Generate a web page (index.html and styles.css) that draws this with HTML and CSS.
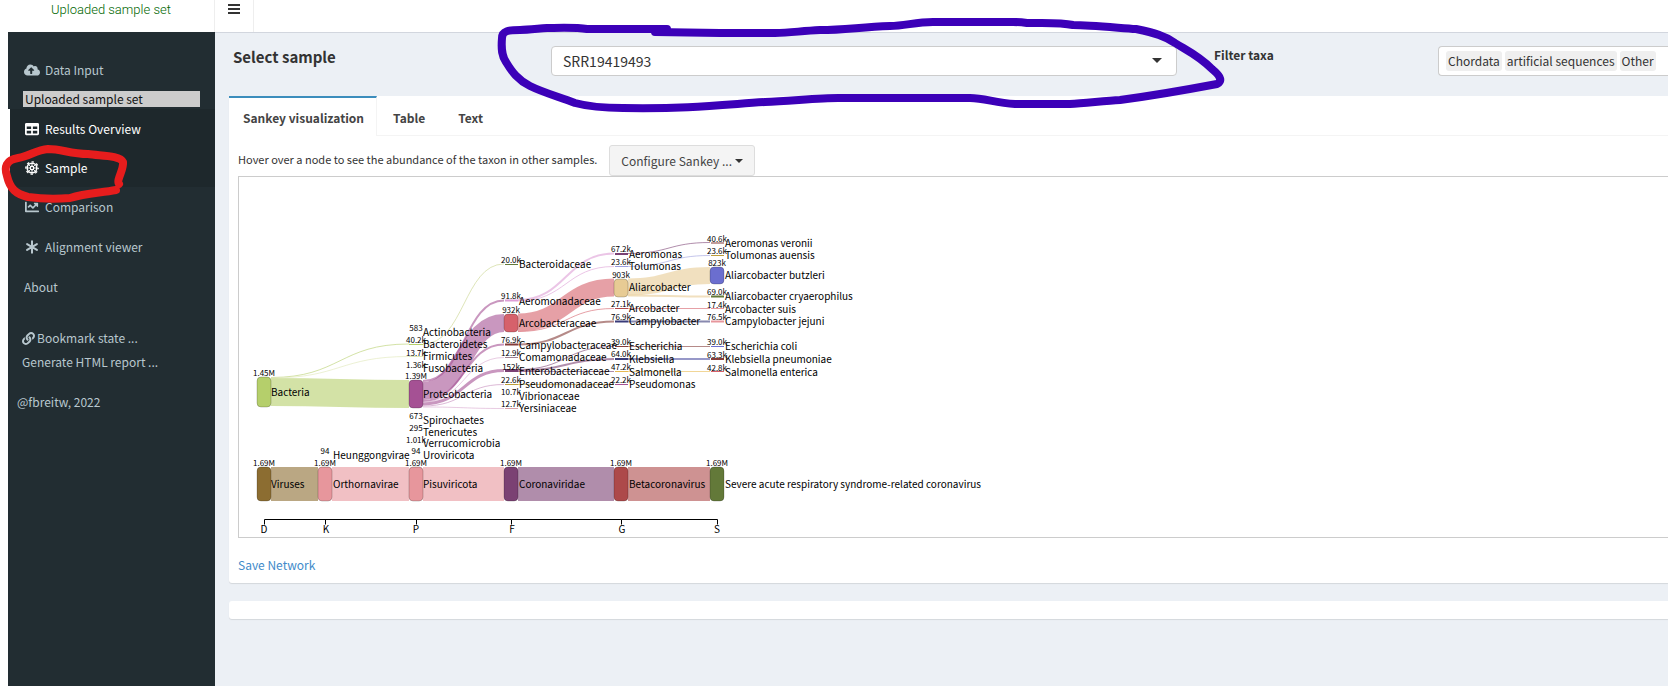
FILE: index.html
```html
<!DOCTYPE html>
<html lang="en">
<head>
<meta charset="utf-8">
<title>Sample</title>
<link rel="stylesheet" href="styles.css">
</head>
<body>
<header class="topbar">
  <span class="logo">Uploaded sample set</span>
  <button class="toggle" type="button" aria-label="Toggle navigation">
    <svg width="12" height="12" viewBox="0 0 12 12"><path d="M0 2h12M0 6h12M0 10h12" stroke="#333" stroke-width="2"/></svg>
  </button>
</header>
<div class="shell">
  <nav class="sidebar">
    <a class="item" href="#"><svg class="icon" viewBox="0 0 640 512"><path d="M537.600 226.600c4.100-10.700 6.400-22.400 6.400-34.600 0-53-43-96-96-96-19.700 0-38.100 6-53.300 16.200C367 64.200 315.300 32 256 32c-88.400 0-160 71.600-160 160 0 2.700.1 5.400.2 8.100C40.200 219.800 0 273.200 0 336c0 79.500 64.500 144 144 144h368c70.700 0 128-57.300 128-128 0-61.900-44-113.600-102.400-125.400zM393.400 288H328v112c0 8.800-7.200 16-16 16h-48c-8.800 0-16-7.200-16-16V288h-65.400c-14.300 0-21.400-17.200-11.300-27.300l105.400-105.400c6.200-6.200 16.400-6.200 22.600 0l105.400 105.400c10.100 10.100 2.900 27.300-11.300 27.300z"/></svg>Data Input</a>
    <div class="sample-set">Uploaded sample set</div>
    <div class="active">
      <a class="item" href="#"><svg class="icon" viewBox="0 0 512 512"><path fill-rule="evenodd" d="M464 32H48C21.500 32 0 53.500 0 80v352c0 26.500 21.500 48 48 48h416c26.500 0 48-21.500 48-48V80c0-26.500-21.500-48-48-48zM224 416H64v-96h160v96zm0-160H64v-96h160v96zm224 160H288v-96h160v96zm0-160H288v-96h160v96z"/></svg>Results Overview</a>
      <a class="item" href="#"><svg class="icon" viewBox="0 0 16 16"><g fill="none" stroke="currentColor"><circle cx="8" cy="8" r="5.500" stroke-width="1.800"/><circle cx="8" cy="8" r="2" stroke-width="1.500"/><path stroke-width="1" d="M8 3v3M8 10v3M3 8h3M10 8h3M4.500 4.500l2 2M9.500 9.500l2 2M11.500 4.500l-2 2M6.500 9.500l-2 2"/><circle cx="8" cy="8" r="7" stroke-width="1.600" stroke-dasharray="2.800 2.700" stroke-dashoffset="1.400"/></g></svg>Sample</a>
    </div>
    <a class="item" href="#"><svg class="icon" viewBox="0 0 512 512"><path d="M496 384H64V80c0-8.840-7.160-16-16-16H16C7.160 64 0 71.160 0 80v336c0 17.670 14.330 32 32 32h464c8.840 0 16-7.160 16-16v-32c0-8.840-7.160-16-16-16zM464 96H345.940c-21.380 0-32.090 25.850-16.970 40.970l32.400 32.400L288 242.750l-73.370-73.370c-12.500-12.500-32.760-12.500-45.250 0l-68.690 68.690c-6.250 6.250-6.250 16.380 0 22.630l22.620 22.620c6.250 6.250 16.380 6.250 22.630 0L192 237.250l73.370 73.370c12.500 12.500 32.760 12.500 45.250 0l96-96 32.400 32.400c15.120 15.120 40.970 4.410 40.970-16.970V112c.01-8.840-7.150-16-15.990-16z"/></svg>Comparison</a>
    <a class="item" href="#"><svg class="icon" viewBox="0 0 16 16"><path d="M8 1.500v13M2.400 4.700l11.200 6.600M13.600 4.700L2.400 11.300" fill="none" stroke="currentColor" stroke-width="2.300" stroke-linecap="round"/></svg>Alignment viewer</a>
    <a class="item" href="#">About</a>
    <div class="actions">
      <a class="action" href="#"><svg class="link-icon" viewBox="0 0 512 512"><path d="M326.612 185.391c59.747 59.809 58.927 155.698.36 214.590-.110.120-.240.250-.360.370l-67.200 67.200c-59.270 59.270-155.699 59.262-214.960 0-59.270-59.260-59.270-155.700 0-214.960l37.106-37.106c9.840-9.840 26.786-3.300 27.294 10.606.648 17.722 3.826 35.527 9.690 52.721 1.986 5.822.567 12.262-3.783 16.612l-13.087 13.087c-28.026 28.026-28.905 73.660-1.155 101.960 28.024 28.579 74.086 28.749 102.325.510l67.200-67.190c28.191-28.191 28.073-73.757 0-101.830-3.701-3.694-7.429-6.564-10.341-8.569a16.037 16.037 0 0 1-6.947-12.606c-.396-10.567 3.348-21.456 11.698-29.806l21.054-21.055c5.521-5.521 14.182-6.199 20.584-1.731a152.482 152.482 0 0 1 20.522 17.197zM467.547 44.449c-59.261-59.262-155.690-59.270-214.960 0l-67.200 67.200c-.120.120-.250.250-.360.370-58.566 58.892-59.387 154.781.360 214.590a152.454 152.454 0 0 0 20.521 17.196c6.402 4.468 15.064 3.789 20.584-1.731l21.054-21.055c8.350-8.350 12.094-19.239 11.698-29.806a16.037 16.037 0 0 0-6.947-12.606c-2.912-2.005-6.640-4.875-10.341-8.569-28.073-28.073-28.191-73.639 0-101.830l67.200-67.190c28.239-28.239 74.300-28.069 102.325.510 27.750 28.300 26.872 73.934-1.155 101.960l-13.087 13.087c-4.350 4.350-5.769 10.790-3.783 16.612 5.864 17.194 9.042 34.999 9.690 52.721.509 13.906 17.454 20.446 27.294 10.606l37.106-37.106c59.271-59.259 59.271-155.699.001-214.959z"/></svg>Bookmark state ...</a>
      <a class="action" href="#">Generate HTML report ...</a>
    </div>
    <div class="credit">@fbreitw, 2022</div>
  </nav>

  <main class="content">
    <form class="filters">
      <label class="select-label" for="sample">Select sample</label>
      <div class="select-wrap"><select id="sample" class="sample-select"><option>SRR19419493</option></select></div>
      <span class="filter-label" id="taxa-label">Filter taxa</span>
      <div class="taxa" role="group" aria-labelledby="taxa-label"><span class="tag">Chordata</span><span class="tag">artificial sequences</span><span class="tag">Other</span></div>
    </form>

    <section class="panel">
      <div class="tabs" role="tablist">
        <button class="tab selected" type="button" role="tab" aria-selected="true">Sankey visualization</button>
        <button class="tab" type="button" role="tab">Table</button>
        <button class="tab" type="button" role="tab">Text</button>
      </div>
      <div class="pane">
        <div class="hint"><span class="hint-text">Hover over a node to see the abundance of the taxon in other samples.</span><button class="configure" type="button">Configure Sankey ...<span class="caret"></span></button></div>
        <div class="chart">
          <svg class="sankey" role="img" aria-label="Sankey diagram of taxa">
            <g transform="translate(-239 -177)">
              <g class="links">
                <path d="M271 392C340 392 340 394 409 394" stroke="#b5cf6b" stroke-width="28"/>
                <path d="M271 377.500C340 377.500 340 344 409 344" stroke="#b5cf6b"/>
                <path d="M271 378C340 378 340 356.500 409 356.500" stroke="#dfe8b8" stroke-width="1"/>
                <path d="M423 344C464 344 464 264 504 264" stroke="#c8d48a"/>
                <path d="M423 381C464 381 464 300.500 504 300.500" stroke="#a55194" stroke-width="2"/>
                <path d="M423 391C464 391 464 323 504 323" stroke="#a55194" stroke-width="18"/>
                <path d="M423 401C464 401 464 344.500 504 344.500" stroke="#a55194" stroke-width="2"/>
                <path d="M423 402C464 402 464 357.500 504 357.500" stroke="#d9a8cf" stroke-width="1"/>
                <path d="M423 404C464 404 464 370.500 504 370.500" stroke="#a55194" stroke-width="3"/>
                <path d="M423 406C464 406 464 384.500 504 384.500" stroke="#c48abb" stroke-width="1"/>
                <path d="M423 407C464 407 464 408.500 504 408.500" stroke="#d9a8cf" stroke-width="1"/>
                <path d="M518 300C566 300 566 253.500 614 253.500" stroke="#de9ed6" stroke-width="2"/>
                <path d="M518 301C566 301 566 266.500 614 266.500" stroke="#de9ed6" stroke-width="1"/>
                <path d="M518 322.500C566 322.500 566 287.500 614 287.500" stroke="#d6616b" stroke-width="18"/>
                <path d="M518 331.500C566 331.500 566 308.500 614 308.500" stroke="#d6616b" stroke-width="1"/>
                <path d="M518 344.500C566 344.500 566 321.500 614 321.500" stroke="#843c39" stroke-width="2"/>
                <path d="M518 369.500C566 369.500 566 346.500 614 346.500" stroke="#7b4173"/>
                <path d="M518 370.500C566 370.500 566 359 614 359" stroke="#7b4173" stroke-width="2"/>
                <path d="M518 371.500H614" stroke="#7b4173"/>
                <path d="M518 384.500H614" stroke="#bd9e39" stroke-width="1"/>
                <path d="M628 253.500C669 253.500 669 242.500 710 242.500" stroke="#7b4173"/>
                <path d="M628 266.500C669 266.500 669 255.500 710 255.500" stroke="#9c9ede" stroke-width="1"/>
                <path d="M628 287C669 287 669 275.500 710 275.500" stroke="#e7cb94" stroke-width="17"/>
                <path d="M628 295.500C669 295.500 669 296.500 710 296.500" stroke="#e7cb94" stroke-width="2"/>
                <path d="M628 308.500H710" stroke="#d6616b" stroke-width="1"/>
                <path d="M628 321.500H710" stroke="#393b79" stroke-width="2"/>
                <path d="M628 346.500H710" stroke="#843c39" stroke-width="1"/>
                <path d="M628 359H710" stroke="#5254a3" stroke-width="2"/>
                <path d="M628 371.500H710" stroke="#e7ba52" stroke-width="1"/>
                <path d="M271 484H318" stroke="#8c6d31" stroke-width="34"/>
                <path d="M332 484H409" stroke="#e7969c" stroke-width="34"/>
                <path d="M423 484H504" stroke="#e7969c" stroke-width="34"/>
                <path d="M518 484H614" stroke="#7b4173" stroke-width="34"/>
                <path d="M628 484H710" stroke="#ad494a" stroke-width="34"/>
              </g>
              <g class="nodes">
                <rect x="257" y="377" width="14" height="30" rx="4" fill="#b5cf6b"/>
                <rect x="409" y="380" width="14" height="28" rx="4" fill="#a55194"/>
                <rect x="504" y="314" width="14" height="18" rx="4" fill="#d6616b"/>
                <rect x="614" y="279" width="14" height="18" rx="4" fill="#e7cb94"/>
                <rect x="710" y="267" width="14" height="17" rx="4" fill="#6b6ecf"/>
                <rect x="257" y="467" width="14" height="34" rx="4" fill="#8c6d31"/>
                <rect x="318" y="467" width="14" height="34" rx="4" fill="#e7969c"/>
                <rect x="409" y="467" width="14" height="34" rx="4" fill="#e7969c"/>
                <rect x="504" y="467" width="14" height="34" rx="4" fill="#7b4173"/>
                <rect x="614" y="467" width="14" height="34" rx="4" fill="#ad494a"/>
                <rect x="710" y="467" width="14" height="34" rx="4" fill="#637939"/>
              </g>
              <g class="thin">
                <path d="M409 344.500h14" stroke="#b5cf6b"/><path d="M409 356.500h14" stroke="#dfe8b8"/>
                <path d="M505 264.500h13" stroke="#637939"/><path d="M505 300.500h13" stroke="#de9ed6" stroke-width="2"/>
                <path d="M505 344.500h13" stroke="#843c39" stroke-width="2"/><path d="M505 357.500h13" stroke="#a08090"/>
                <path d="M505 370.500h13" stroke="#7b4173" stroke-width="3"/><path d="M505 384.500h13" stroke="#bd9e39"/>
                <path d="M505 408.500h13" stroke="#d9a0a8"/>
                <path d="M615 254h13" stroke="#7b4173" stroke-width="2"/><path d="M615 266.500h13" stroke="#9c9ede"/>
                <path d="M615 308.500h13" stroke="#ad494a"/><path d="M615 321.500h13" stroke="#393b79" stroke-width="2"/>
                <path d="M615 346.500h13" stroke="#843c39"/><path d="M615 359h13" stroke="#393b79" stroke-width="2"/>
                <path d="M615 371.500h13" stroke="#e7ba52"/><path d="M615 384.500h13" stroke="#a55194"/>
                <path d="M711 243h13" stroke="#843c39"/><path d="M711 255.500h13" stroke="#bd9e39"/>
                <path d="M711 296.500h13" stroke="#637939" stroke-width="2"/><path d="M711 308.500h13" stroke="#e7969c"/>
                <path d="M711 321.500h13" stroke="#e7969c" stroke-width="2"/><path d="M711 346.500h13" stroke="#6b6ecf"/>
                <path d="M711 359h13" stroke="#843c39" stroke-width="2"/><path d="M711 371.500h13" stroke="#d6616b"/>
              </g>
              <g class="names">
                <text x="271" y="396">Bacteria</text><text x="271" y="488">Viruses</text>
                <text x="333" y="459">Heunggongvirae</text><text x="333" y="488">Orthornavirae</text>
                <text x="423" y="336">Actinobacteria</text><text x="423" y="348">Bacteroidetes</text><text x="423" y="360">Firmicutes</text><text x="423" y="372">Fusobacteria</text><text x="423" y="398">Proteobacteria</text><text x="423" y="424">Spirochaetes</text><text x="423" y="436">Tenericutes</text><text x="423" y="447">Verrucomicrobia</text><text x="423" y="459">Uroviricota</text><text x="423" y="488">Pisuviricota</text>
                <text x="519" y="268">Bacteroidaceae</text><text x="519" y="305">Aeromonadaceae</text><text x="519" y="327">Arcobacteraceae</text><text x="519" y="349">Campylobacteraceae</text><text x="519" y="361">Comamonadaceae</text><text x="519" y="375">Enterobacteriaceae</text><text x="519" y="388">Pseudomonadaceae</text><text x="519" y="400">Vibrionaceae</text><text x="519" y="412">Yersiniaceae</text><text x="519" y="488">Coronaviridae</text>
                <text x="629" y="258">Aeromonas</text><text x="629" y="270">Tolumonas</text><text x="629" y="291">Aliarcobacter</text><text x="629" y="312">Arcobacter</text><text x="629" y="325">Campylobacter</text><text x="629" y="350">Escherichia</text><text x="629" y="363">Klebsiella</text><text x="629" y="376">Salmonella</text><text x="629" y="388">Pseudomonas</text><text x="629" y="488">Betacoronavirus</text>
                <text x="725" y="247">Aeromonas veronii</text><text x="725" y="259">Tolumonas auensis</text><text x="725" y="279">Aliarcobacter butzleri</text><text x="725" y="300">Aliarcobacter cryaerophilus</text><text x="725" y="313">Arcobacter suis</text><text x="725" y="325">Campylobacter jejuni</text><text x="725" y="350">Escherichia coli</text><text x="725" y="363">Klebsiella pneumoniae</text><text x="725" y="376">Salmonella enterica</text><text x="725" y="488">Severe acute respiratory syndrome-related coronavirus</text>
              </g>
              <g class="counts">
                <text x="264" y="376">1.45M</text><text x="264" y="466">1.69M</text>
                <text x="325" y="454">94</text><text x="325" y="466">1.69M</text>
                <text x="416" y="331">583</text><text x="416" y="343">40.2k</text><text x="416" y="356">13.7k</text><text x="416" y="368">1.36k</text><text x="416" y="379">1.39M</text><text x="416" y="419">673</text><text x="416" y="431">295</text><text x="416" y="443">1.01k</text><text x="416" y="454">94</text><text x="416" y="466">1.69M</text>
                <text x="511" y="263">20.0k</text><text x="511" y="299">91.8k</text><text x="511" y="313">932k</text><text x="511" y="343">76.9k</text><text x="511" y="356">12.9k</text><text x="511" y="370">152k</text><text x="511" y="383">22.6k</text><text x="511" y="395">10.7k</text><text x="511" y="407">12.7k</text><text x="511" y="466">1.69M</text>
                <text x="621" y="252">67.2k</text><text x="621" y="265">23.6k</text><text x="621" y="278">903k</text><text x="621" y="307">27.1k</text><text x="621" y="320">76.9k</text><text x="621" y="345">39.0k</text><text x="621" y="357">64.0k</text><text x="621" y="370">47.2k</text><text x="621" y="383">22.2k</text><text x="621" y="466">1.69M</text>
                <text x="717" y="242">40.6k</text><text x="717" y="254">23.6k</text><text x="717" y="266">823k</text><text x="717" y="295">69.0k</text><text x="717" y="308">17.4k</text><text x="717" y="320">76.5k</text><text x="717" y="345">39.0k</text><text x="717" y="358">63.3k</text><text x="717" y="371">42.8k</text><text x="717" y="466">1.69M</text>
              </g>
              <path class="axis" d="M264.500 524.500V519.500H717.500V524.500M325.500 519.500v5M416.500 519.500v5M511.500 519.500v5M621.500 519.500v5"/>
              <g class="ranks"><text x="264" y="533">D</text><text x="326" y="533">K</text><text x="416" y="533">P</text><text x="512" y="533">F</text><text x="622" y="533">G</text><text x="717" y="533">S</text></g>
            </g>
          </svg>
        </div>
        <a class="save" href="#">Save Network</a>
      </div>
    </section>
    <section class="panel empty"></section>
  </main>
</div>
<svg class="marks" width="1240" height="210" aria-hidden="true">
  <path stroke="#e71d1d" d="M119 184C116 180 124 170 123 162C120 155 100 156 88 154C70 154 62 149 48 149C36 150 30 156 18 158C6 160 4 167 7 176C10 189 16 194 28 197C42 199 58 199 70 198C86 193 100 193 116 190"/>
  <path stroke="#3c00b8" d="M667 29H587C575 27 555 28 547 28C535 29 527 30 520 30C508 30 502 31 502 38C501 50 502 56 506 62C512 72 518 80 530 86C542 92 556 96 575 103C590 107 605 108 623 108C690 109 720 105 765 102C790 101 820 98 838 98H970C985 98 995 103 1015 104H1070C1085 103 1105 101 1120 100C1150 96 1180 91 1217 84C1224 80 1218 74 1212 69C1198 55 1186 50 1175 43C1165 36 1155 33 1136 29C1120 28 1090 25 1073 25C1060 22 1040 23 1027 23C1020 22 1016 22 1013 22H933C915 22 905 26 890 26C860 27 845 30 820 30C800 31 790 33 775 33H720L655 32"/>
</svg>
</body>
</html>
```
FILE: styles.css
```css
* { box-sizing: border-box; }

body {
  margin: 0;
  position: relative;
  min-height: 100vh;
  display: flex;
  flex-direction: column;
  overflow: hidden;
  background: #fff;
  color: #333;
  font: 12px/20px "Noto Sans CJK SC", "Open Sans", sans-serif;
}

a { color: #428bca; text-decoration: none; }
button, select { font: inherit; color: inherit; }

.topbar {
  display: flex;
  height: 32px;
}
.logo {
  width: 215px;
  border-right: 1px solid #eee;
  padding-left: 51px;
  color: #060;
  font: 300 13px/20px Roboto, sans-serif;
}
.toggle {
  width: 39px;
  border: 0;
  border-right: 1px solid #eee;
  background: none;
  padding: 3px 0 0;
  display: flex;
  justify-content: center;
}

.shell {
  flex: 1;
  display: flex;
  padding-left: 8px;
}

.sidebar {
  width: 207px;
  flex: none;
  padding-top: 18px;
  background: #222d32;
  color: #b8c7ce;
}
.sidebar a { color: inherit; }
.item {
  display: flex;
  align-items: center;
  height: 40px;
  padding-left: 16px;
}
.icon {
  width: 16px;
  height: 14px;
  margin-right: 5px;
  fill: currentColor;
}
.sample-set {
  height: 16px;
  margin: 1px 15px 2px;
  padding-left: 2px;
  background: #ccc;
  color: #111;
  line-height: 16px;
}
.active {
  border-left: 2px solid #fff;
  background: #1e282c;
  color: #fff;
}
.active .item { height: 39px; padding-left: 14px; }
.actions {
  display: flex;
  flex-direction: column;
  gap: 4px;
  padding: 21px 0 0 14px;
}
.action { display: flex; align-items: center; }
.link-icon {
  width: 13px;
  height: 13px;
  margin-right: 2px;
  fill: currentColor;
}
.credit { padding: 20px 0 0 9px; }

.content {
  flex: 1;
  min-width: 0;
  padding-left: 14px;
  border-top: 1px solid #d2d6de;
  background: #ecf0f5;
}

.filters {
  display: grid;
  grid-template-columns: 318fr 626fr 261fr 230fr;
  align-items: start;
  height: 63px;
  padding: 13px 0 0 4px;
}
.select-label { font-size: 15px; line-height: 22px; font-weight: 700; }
.select-wrap { position: relative; }
.select-wrap::after {
  content: "";
  position: absolute;
  right: 15px;
  top: 12px;
  border: 5px solid transparent;
  border-top-color: #333;
  border-bottom: 0;
}
.sample-select {
  appearance: none;
  width: 100%;
  height: 30px;
  padding: 0 11px;
  border: 1px solid #ccc;
  border-radius: 4px;
  background: #fff;
  font-size: 14px;
}
.filter-label { padding-left: 37px; font-weight: 700; line-height: 18px; }
.taxa {
  display: flex;
  align-items: center;
  gap: 3px;
  height: 30px;
  padding-left: 7px;
  border: 1px solid #ccc;
  border-right: 0;
  border-radius: 4px 0 0 4px;
  background: #fff;
  white-space: nowrap;
}
.tag {
  padding: 0 2px;
  border-radius: 3px;
  background: #efefef;
}

.panel {
  margin-bottom: 18px;
  border-radius: 3px 0 0 3px;
  background: #fff;
  box-shadow: 0 1px 1px rgba(0, 0, 0, .1);
}
.empty { height: 18px; }
.tabs {
  display: flex;
  height: 40px;
  border-bottom: 1px solid #f4f4f4;
}
.tab {
  height: 40px;
  padding: 2px 16px 0;
  border: 0;
  border-top: 2px solid transparent;
  border-right: 1px solid transparent;
  background: none;
  color: #444;
  font-weight: 700;
}
.selected {
  padding: 2px 12px 0 14px;
  border-top-color: #3c8dbc;
  border-right-color: #f4f4f4;
  background: #fff;
}
.pane { padding: 9px 0 0 9px; }
.hint { display: flex; align-items: center; gap: 12px; height: 31px; }
.hint-text { padding-bottom: 3px; font-size: 11px; }
.configure {
  display: flex;
  align-items: center;
  gap: 3px;
  height: 31px;
  padding: 0 11px;
  border: 1px solid #ddd;
  border-radius: 3px;
  background: #f4f4f4;
  color: #444;
}
.caret {
  border: 4px solid transparent;
  border-top-color: #333;
  border-bottom: 0;
}
.chart {
  border: 1px solid #ccc;
  border-right: 0;
}
.sankey { display: block; width: 100%; height: 360px; }
.links path { fill: none; stroke-opacity: .6; }
.nodes rect { stroke: rgba(0, 0, 0, .2); stroke-width: 1; }
.thin path { fill: none; }
.names text { font-size: 10px; fill: #000; }
.counts text { font-size: 8px; fill: #000; text-anchor: middle; }
.axis { fill: none; stroke: #000; }
.ranks text { font-size: 10px; fill: #000; text-anchor: middle; }
.save { display: block; padding: 17px 0 8px; }

.marks {
  position: absolute;
  left: 0;
  top: 0;
  pointer-events: none;
}
.marks path {
  fill: none;
  stroke-width: 8;
  stroke-linecap: round;
  stroke-linejoin: round;
}
```
